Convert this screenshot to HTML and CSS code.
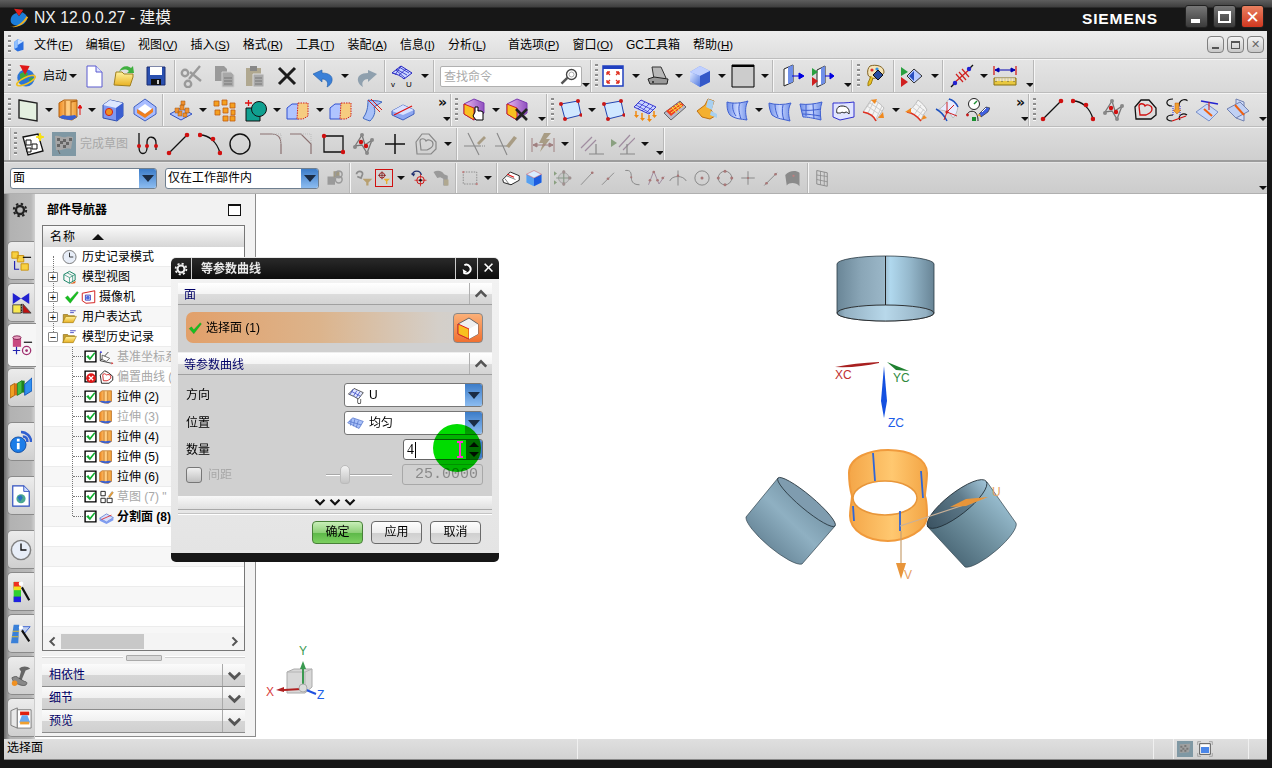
FILE: index.html
```html
<!DOCTYPE html>
<html lang="zh">
<head>
<meta charset="utf-8">
<title>NX 12.0.0.27 - 建模</title>
<link rel="stylesheet" href="styles.css">
</head>
<body>
<svg class="defs" xmlns="http://www.w3.org/2000/svg">
<defs>
<linearGradient id="gB" x1="0" y1="0" x2="1" y2="1"><stop offset="0" stop-color="#dfe8ff"/><stop offset="1" stop-color="#4f78e0"/></linearGradient>
<linearGradient id="gO" x1="0" y1="0" x2="1" y2="0"><stop offset="0" stop-color="#f08a20"/><stop offset=".5" stop-color="#ffd088"/><stop offset="1" stop-color="#ef9a30"/></linearGradient>
<linearGradient id="gY" x1="0" y1="0" x2="0" y2="1"><stop offset="0" stop-color="#fff3a0"/><stop offset="1" stop-color="#e8b020"/></linearGradient>
<linearGradient id="gP" x1="0" y1="0" x2="1" y2="0"><stop offset="0" stop-color="#e8b8f0"/><stop offset="1" stop-color="#9050c0"/></linearGradient>
<linearGradient id="gBs" x1="0" y1="0" x2="1" y2="0"><stop offset="0" stop-color="#6f8fe8"/><stop offset=".5" stop-color="#c8d6ff"/><stop offset="1" stop-color="#6f8fe8"/></linearGradient>
<symbol id="start" viewBox="0 0 24 24"><circle cx="12" cy="14" r="9.5" fill="#2b74d8"/><path d="M5 10l5-3 4 2-1 4-4 4-3-2zM15 15l4-2 1 3-4 4z" fill="#3ea83a"/><ellipse cx="12" cy="17" rx="11" ry="3.5" transform="rotate(-25 12 17)" fill="none" stroke="#f0c020" stroke-width="1.8"/><path d="M5 0l11 1-5 10z" fill="#e01818"/></symbol>
<symbol id="new" viewBox="0 0 24 24"><path d="M5 2h9l6 6v15H5z" fill="#fff" stroke="#5a5ad0"/><path d="M14 2v6h6" fill="#dfe4ff" stroke="#5a5ad0"/></symbol>
<symbol id="open" viewBox="0 0 24 24"><path d="M1 21l2-13h6l2 2h9v3l-3 9z" fill="url(#gY)" stroke="#a08020"/><path d="M6 8c2-6 8-7 12-4l2-2 1 7-7 0 2-2c-3-2-7-2-10 1z" fill="#40b040"/></symbol>
<symbol id="save" viewBox="0 0 24 24"><path d="M3 3h18v18H3z" fill="#2a50b0" stroke="#1a2c70"/><path d="M6 3h12v8H6z" fill="#fff"/><path d="M7 15h10v6H7z" fill="#111"/><path d="M13 16h2v4h-2z" fill="#ccc"/></symbol>
<symbol id="cut" viewBox="0 0 24 24"><g fill="none" stroke="#9a9a9a" stroke-width="2.4"><path d="M20 2L9 15M10 8l11 9"/><circle cx="5" cy="9" r="3.2"/><circle cx="8" cy="20" r="3.2"/></g></symbol>
<symbol id="copy" viewBox="0 0 24 24"><path d="M3 2h9l3 3v12H3z" fill="#9a9a9a"/><path d="M10 8h9l3 3v12H10z" fill="#a8a8a8" stroke="#d0d0d0"/><path d="M12 14h8M12 17h8M12 20h8" stroke="#777"/></symbol>
<symbol id="paste" viewBox="0 0 24 24"><path d="M3 4h15v18H3z" fill="#b0a890"/><path d="M7 2h7v5H7z" fill="#888"/><path d="M10 10h11v13H10z" fill="#aaa" stroke="#ddd"/><path d="M12 14h7M12 17h7M12 20h7" stroke="#777"/></symbol>
<symbol id="del" viewBox="0 0 24 24"><path d="M4 4l16 16M20 4L4 20" stroke="#1c1c1c" stroke-width="3"/></symbol>
<symbol id="undo" viewBox="0 0 24 24"><path d="M2 10l9-4v3c7 0 11 3 10 8-.6 3-3 5-5 6 2-5-1-8-5-8v3z" fill="#3a80d8" stroke="#1f5aa8" stroke-width=".6"/></symbol>
<symbol id="redo" viewBox="0 0 24 24"><path d="M22 10l-9-4v3c-7 0-11 3-10 8 .6 3 3 5 5 6-2-5 1-8 5-8v3z" fill="#8fa0ae"/></symbol>
<symbol id="surf" viewBox="0 0 24 24"><path d="M2 9l9-7 11 7-8 6c-3-3-7-5-12-6z" fill="#c8d4ff" stroke="#2222c0"/><path d="M6 6l9 8M11 2l-6 9M16 5l-7 6M6 5l11 6M9 3l10 6" stroke="#2222c0" stroke-width=".8"/><text x="1" y="23" font-size="8" font-family="Liberation Sans">v</text><text x="16" y="23" font-size="8" font-family="Liberation Sans">U</text></symbol>
<symbol id="find" viewBox="0 0 24 24"><circle cx="15" cy="9" r="6" fill="#fff" stroke="#444" stroke-width="1.6"/><circle cx="15" cy="9" r="3" fill="none" stroke="#999"/><path d="M10 13l-7 7" stroke="#555" stroke-width="3"/></symbol>
<symbol id="fit" viewBox="0 0 24 24"><path d="M2 2h20v20H2z" fill="#fff" stroke="#2040c0" stroke-width="1.5"/><path d="M2 2h20v3H2z" fill="#2040c0"/><path d="M6 8l3 3M18 8l-3 3M6 19l3-3M18 19l-3-3M6 8h3M6 8v3M18 8h-3M18 8v3M6 19h3M6 19v-3M18 19h-3M18 19v-3" stroke="#e03020" stroke-width="1.3"/></symbol>
<symbol id="shade" viewBox="0 0 24 24"><path d="M6 3h9l5 11-3 1H8z" fill="#b8b8b8" stroke="#333"/><path d="M2 15l6-2 14 2-1 5H4z" fill="#999" stroke="#222"/><circle cx="7" cy="18" r="1" fill="#222"/></symbol>
<symbol id="cube" viewBox="0 0 24 24"><path d="M2 8l10-6 10 5v11l-10 5-10-6z" fill="#6f8ff0"/><path d="M2 8l10-6 10 5-10 5z" fill="#c0d0ff"/><path d="M12 12l10-5v11l-10 5z" fill="#3458c8"/><path d="M2 8l10 4v11l-10-6z" fill="url(#gB)"/></symbol>
<symbol id="rectk" viewBox="0 0 24 24"><path d="M1 1h22v22H1z" fill="#ccc" stroke="#000"/><path d="M1 1h22v2H1z"/></symbol>
<symbol id="plA" viewBox="0 0 24 24"><path d="M2 5l9-4v17l-9 4z" fill="#fff" stroke="#222"/><path d="M11 1v17l-5 2V3z" fill="#6f8fe8"/><path d="M10 12h11M17 9l5 3-5 3z" stroke="#0000e0" fill="#0000e0"/></symbol>
<symbol id="plB" viewBox="0 0 24 24"><path d="M6 6l8-4v17l-8 4z" fill="#fff" stroke="#222"/><path d="M14 2v17l-4 2V4z" fill="#6f8fe8"/><path d="M14 12h8M19 9l4 3-4 3z" stroke="#0000e0" fill="#0000e0"/><path d="M1 4l6 4-6 4z" fill="#2aa040"/><path d="M1 13l6 4-6 5z" fill="#d02020"/></symbol>
<symbol id="pal" viewBox="0 0 24 24"><path d="M6 2c6-2 14 0 14 6 0 4-6 2-7 5-1 2-7 2-9-2-1-4 0-7 2-9z" fill="#f4e4b8" stroke="#806020"/><circle cx="8" cy="6" r="1.6" fill="#e03030"/><circle cx="13" cy="5" r="1.6" fill="#3090e0"/><path d="M9 14l-2 6-3 2v-3l3-7" fill="#e8c020" stroke="#a08010"/><path d="M14 6l5 5-5 5-5-5z" fill="#2a4ca0" stroke="#111"/></symbol>
<symbol id="vis" viewBox="0 0 24 24"><path d="M14 5l8 7-8 7-7-7z" fill="#b8ccff" stroke="#333"/><path d="M14 7l-5 5 5 5z" fill="#2a50c0"/><path d="M1 3l7 5-7 4z" fill="#2aa040"/><path d="M1 13l7 5-7 5z" fill="#d02020"/></symbol>
<symbol id="ant" viewBox="0 0 24 24"><path d="M3 20L21 4M6 10l7 8M9 8l7 8M12 5l7 8" stroke="#d02020" stroke-width="1.2"/><path d="M1 23l3-3M23 1l-3 3" stroke="#111" stroke-width="1.4"/><circle cx="5" cy="19" r="2.2" fill="#2222d0"/><circle cx="19" cy="5" r="2.2" fill="#2222d0"/></symbol>
<symbol id="rul" viewBox="0 0 24 24"><path d="M1 2v9M23 2v9" stroke="#d01010" stroke-width="1.2"/><path d="M2 6h20M2 6l4-2v4zM22 6l-4-2v4z" stroke="#0000b0" fill="#0000b0"/><path d="M1 14h22v7H1z" fill="#e8c840" stroke="#887010"/><path d="M3 14v4M6 14v3M9 14v4M12 14v3M15 14v4M18 14v3M21 14v4" stroke="#444" stroke-width=".8"/><path d="M2 14h20v3H2z" fill="#fff" fill-opacity=".6"/></symbol>
<symbol id="plane" viewBox="0 0 24 24"><path d="M3 2l18 3v18L3 20z" fill="#e4f0e0" stroke="#222" stroke-width="1.4"/></symbol>
<symbol id="extr" viewBox="0 0 24 24"><path d="M1 5l5-3h13v17l-5 3c-5-1-9-1-13-3z" fill="url(#gO)" stroke="#b06010"/><path d="M7 3v17M13 3v19M19 3l-6 1" stroke="#b06010"/><path d="M1 19c4 3 10 3 13 3l5-3-2-2c-4 1-10 1-12 0z" fill="#3a60d0"/><path d="M22 8v9M20 10l2-3 2 3z" stroke="#e01010" fill="#e01010"/></symbol>
<symbol id="hole" viewBox="0 0 24 24"><path d="M2 7l7-5 13 3v13l-6 5L2 20z" fill="#8098f0" stroke="#3050b0"/><path d="M2 7l13 3 7-5-13-3z" fill="#dde6ff"/><path d="M15 10v13l7-5V5z" fill="#3a5ed0"/><circle cx="8" cy="14" r="3.6" fill="#f09020" stroke="#d02020"/></symbol>
<symbol id="offs" viewBox="0 0 24 24"><path d="M12 1l11 8v7l-11 7L1 16V9z" fill="#a8bcff" stroke="#3f5fc0"/><path d="M12 6l7 5-7 5-7-5z" fill="#fff"/><path d="M4 11l8 5 8-6v4l-8 6-8-5z" fill="#f08020"/></symbol>
<symbol id="patt" viewBox="0 0 24 24"><path d="M1 16l11-6 11 6-11 6z" fill="#b0c4ff" stroke="#3050c0"/><g fill="#f09030" stroke="#a05a10" stroke-width=".5"><path d="M6 10h4v5H6zM11 7h4v5h-4zM16 10h4v5h-4zM9 13h4v5H9zM14 15h4v4h-4zM12 3h4v4h-4z"/></g></symbol>
<symbol id="pat2" viewBox="0 0 24 24"><g fill="#f4a020" stroke="#c05a10" stroke-width=".8"><path d="M2 3h5v5H2zM10 2h5v5h-5zM18 5h5v5h-5zM3 12h5v5H3zM11 10h5v5h-5zM19 12h4v5h-4zM11 18h5v5h-5zM18 18h5v5h-5z"/></g></symbol>
<symbol id="unite" viewBox="0 0 24 24"><path d="M2 10h14v13H2z" fill="#10a090" stroke="#111"/><circle cx="15" cy="11" r="7.5" fill="#10a090" stroke="#111"/><path d="M1 5h7M4.500 2v6" stroke="#e01010" stroke-width="1.3"/></symbol>
<symbol id="trm" viewBox="0 0 24 24"><path d="M1 10l5-4h11v12l-5 3H1z" fill="#b0c4ff" stroke="#3050d0"/><path d="M12 5h10v13l-5 3h-6z" fill="#f6cc80" stroke="#d02020" stroke-dasharray="1.500 1"/></symbol>
<symbol id="rld" viewBox="0 0 24 24"><path d="M8 2c4 1 9 0 14 2l-8 5c2 5 0 10-4 14-3-1-6-2-7-3 4-5 5-11 5-18z" fill="#a8c0f8" stroke="#4068c0"/><path d="M8 2l12 12M11 1l11 11" stroke="#d02020"/></symbol>
<symbol id="spl" viewBox="0 0 24 24"><path d="M1 13l11-6 11 5v4l-11 6-11-5z" fill="#8fa8f0" stroke="#4060c0"/><path d="M1 13l11-6 11 5-11 5z" fill="#d8e2ff"/><path d="M3 17L21 8" stroke="#e01010" stroke-width="1.3"/></symbol>
<symbol id="bxh" viewBox="0 0 24 24"><path d="M2 6l10-5 10 4v10l-10 7L2 16z" fill="url(#gP)" stroke="#7a3ab0"/><path d="M2 6l10 4v12L2 16z" fill="#f8c020" stroke="#d02020"/><path d="M13 14v-5h3v4l3 0 2 1v8h-7l-3-4z" fill="#fff" stroke="#000"/></symbol>
<symbol id="bxx" viewBox="0 0 24 24"><path d="M2 6l10-5 10 4v10l-10 7L2 16z" fill="url(#gP)" stroke="#7a3ab0"/><path d="M2 6l10 4v12L2 16z" fill="#f8c020" stroke="#d02020"/><path d="M11 11l11 11M22 11L11 22" stroke="#222" stroke-width="2.6"/></symbol>
<symbol id="pA" viewBox="0 0 24 24"><path d="M3 6l17-3 3 14-16 4z" fill="#d0e8ff" stroke="#2244b0"/><g fill="#c81818"><circle cx="3" cy="6" r="2"/><circle cx="20" cy="3" r="2"/><circle cx="23" cy="17" r="1.800"/><circle cx="7" cy="21" r="2"/></g></symbol>
<symbol id="mesh" viewBox="0 0 24 24"><path d="M1 9l7-7 15 7-7 7z" fill="#c8d4ff" stroke="#3838d0"/><path d="M5 5l15 7M3 7l14 8M12 4l-7 7M16 6l-7 7M20 8l-7 7" stroke="#3838d0" stroke-width=".8"/><path d="M3 13v5M9 15v6M16 17v5M21 13v5" stroke="#f08a10" stroke-width="1.500"/><path d="M1 17h5l-2.500 3zM7 20h5l-2.500 3zM14 21h5l-2.500 3zM19 17h5l-2.500 3z" fill="#f08a10"/></symbol>
<symbol id="heat" viewBox="0 0 24 24"><path d="M1 15l7 7 15-13-6-6z" fill="#b8b8c8" stroke="#666"/><path d="M3 13l5 5 13-11-4-3z" fill="#f04020"/><path d="M6 13l12-8M8 15l11-8M9 9l5 6M12 7l5 6M15 5l4 5" stroke="#f8e040"/></symbol>
<symbol id="swp" viewBox="0 0 24 24"><path d="M15 1l6 2-3 9 4 6-5 3-8-2-5-6 8-6z" fill="#f4b030" stroke="#c07010"/><path d="M15 1l6 2-2 9-6-3z" fill="#a8d0f0"/><path d="M17 17l7 3v-4l-6-3" fill="#a8d0f0"/></symbol>
<symbol id="cA" viewBox="0 0 24 24"><path d="M2 4c6 2 15 1 21-1-3 5-3 12-1 19-6-1-12-1-17-5C2 13 2 9 2 4z" fill="url(#gBs)" stroke="#4060d0"/><path d="M8 5c-1 4 0 9 3 13M15 5c-2 4-1 10 1 16" stroke="#4060d0" fill="none"/></symbol>
<symbol id="cB" viewBox="0 0 24 24"><path d="M1 5c6 2 15 2 22 0-3 5-3 11-1 18-7-2-13-2-18-6C2 13 1 9 1 5z" fill="url(#gBs)" stroke="#4060d0"/><path d="M7 6c0 4 1 9 3 13M15 7c-1 4-1 10 1 15" stroke="#4060d0" fill="none"/></symbol>
<symbol id="cC" viewBox="0 0 24 24"><path d="M1 6c7 1 15 0 22-2-2 6-2 11-1 18-8-2-14-3-18-3-1-4-2-8-3-13z" fill="url(#gBs)" stroke="#4060d0"/><path d="M7 6v12M14 6l1 15M2 12c6 1 14 0 20-1M3 16c6 0 12 1 19 2" stroke="#4060d0" fill="none"/></symbol>
<symbol id="cD" viewBox="0 0 24 24"><path d="M2 5c8 0 14 0 21-1v15l-14 3-7-3z" fill="#e0e4ff" stroke="#3030d0"/><path d="M6 15c-1-3 0-7 5-7s8 3 7 8c-1-1-2-2-3-2l-2 1c-1-1-3-1-3 0-1 0-2 0-4 0z" fill="#fff" stroke="#222"/></symbol>
<symbol id="cE" viewBox="0 0 24 24"><path d="M10 2c4 0 9 3 13 8l-8 13c-3-5-8-8-13-9z" fill="#f4f4f4" stroke="#bbb"/><path d="M10 2c-1 4-5 8-8 12M13 3l-6 12M17 5l-6 13M21 8l-6 13M6 8l12 8M9 5l12 8" stroke="#ccc" fill="none"/><path d="M2 14c6 1 11 4 13 9" stroke="#e03020" stroke-width="1.500" fill="none"/><path d="M10 2l6-1-2 5zM17 20l5-6 1 6z" fill="#f08a20"/></symbol>
<symbol id="cF" viewBox="0 0 24 24"><path d="M14 2c4 3 7 6 9 10-3 3-5 7-6 11-4-5-8-8-14-9 5-3 8-7 11-12z" fill="#f4f4f4" stroke="#bbb"/><path d="M8 9l12 9M11 5l11 9M10 17l7-10M13 20l7-9" stroke="#ccc"/><path d="M3 14c6 1 10 4 14 9" stroke="#e03020" stroke-width="1.500" fill="none"/><path d="M1 14l6-4v5zM17 22l3-5 3 3z" fill="#f08a20"/></symbol>
<symbol id="csy" viewBox="0 0 24 24"><path d="M14 1c4 1 7 4 9 8-1 5-2 8-5 11-3-5-6-8-15-8 5-3 8-7 11-11z" fill="#e8ecff" stroke="#bbb"/><path d="M1 11c4 2 8 6 11 12" stroke="#1c50c0" stroke-width="1.500" fill="none"/><path d="M14 1c4 1 7 4 9 8" stroke="#1c50c0" stroke-width="1.500" fill="none"/><path d="M12 14L12 4M12 14l10 4M12 14l-3 8M12 14l7-7" stroke="#d02020"/><circle cx="12" cy="14" r="1.600" fill="#d02020"/></symbol>
<symbol id="gge" viewBox="0 0 24 24"><circle cx="8" cy="6" r="5.500" fill="#fff" stroke="#222"/><path d="M8 6l3-3" stroke="#1a9030" stroke-width="1.500"/><path d="M1 17c1-4 6-5 9-2 1 2 2 3 2 8" fill="none" stroke="#222"/><circle cx="1.500" cy="17" r="1.400" fill="#c81818"/><path d="M6 19h4v4H6z" fill="#1a9030"/><path d="M13 16l7-7 4 1-2 4-7 5z" fill="#4060e0" stroke="#222" stroke-width=".6"/><path d="M16 14l4-4" stroke="#fff"/><path d="M11 17l3-1 1 3z" fill="#e8a020"/></symbol>
<symbol id="lin" viewBox="0 0 24 24"><path d="M3 21L20 4" stroke="#111" stroke-width="1.300"/><circle cx="3" cy="21" r="2.300" fill="#d01010"/><circle cx="21" cy="3" r="2.300" fill="#d01010"/></symbol>
<symbol id="arc" viewBox="0 0 24 24"><path d="M2 3c9 0 17 7 20 18" fill="none" stroke="#111" stroke-width="1.300"/><circle cx="2" cy="3" r="2.300" fill="#d01010"/><circle cx="15" cy="7" r="2.300" fill="#d01010"/><circle cx="22" cy="21" r="2.300" fill="#d01010"/></symbol>
<symbol id="pol" viewBox="0 0 24 24"><path d="M3 14l7-11 3 10 7-5-5 13-5-8z" fill="none" stroke="#777" stroke-width="1.300"/><g fill="#888"><circle cx="10" cy="3" r="2"/><circle cx="3" cy="15" r="2"/><circle cx="20" cy="8" r="2"/><circle cx="15" cy="21" r="2"/></g><circle cx="9" cy="10" r="2.200" fill="#d01010"/><circle cx="14" cy="14" r="2.200" fill="#d01010"/></symbol>
<symbol id="hrt" viewBox="0 0 24 24"><path d="M2 9l6-7h8l7 8v7l-5 4H3z" fill="none" stroke="#111" stroke-width="1.300"/><path d="M6 8c0-3 5-3 6 0 2-2 7-1 7 3 0 3-2 4-6 6H7z" fill="none" stroke="#d01010" stroke-width="1.300"/></symbol>
<symbol id="brg" viewBox="0 0 24 24"><path d="M9 1C1 1 1 8 8 8M9 17c-8 0-8 6-1 6M15 8c0-8 9-7 8-5M16 22c-3-4 3-8 7-5" fill="none" stroke="#111" stroke-width="1.200"/><path d="M9 8v10M16 8v10" stroke="#2222e0" stroke-dasharray="1 1"/><path d="M11 5h4v7h2l-4 4-4-4h2z" fill="#f0a030" stroke="#c05a10" stroke-width=".5"/><path d="M8 23l14-5" stroke="#d01010" stroke-width="1.300"/></symbol>
<symbol id="prj" viewBox="0 0 24 24"><path d="M1 14l11-8 11 8-9 9z" fill="#c8d8f8" stroke="#7a90c8"/><path d="M6 3l17 3" stroke="#2222d0" stroke-width="1.500"/><path d="M14 4v8" stroke="#d01010"/><path d="M9 11l8 7" stroke="#f06010" stroke-width="2"/></symbol>
<symbol id="int" viewBox="0 0 24 24"><path d="M10 1l8 3v19l-8-3z" fill="#d0dcf8" stroke="#7080b0"/><path d="M1 11l13-7 9 9-13 7z" fill="#c0d0f4" stroke="#7080b0"/><path d="M9 7l9 10" stroke="#f06010" stroke-width="2"/></symbol>
<symbol id="skt" viewBox="0 0 24 24"><path d="M2 5l15-3 5 17-15 4z" fill="#fff" stroke="#111" stroke-width="1.300"/><path d="M5 8h5v5H5zM11 12h5v5h-5zM6 16h4v4H6z" fill="#fff" stroke="#111"/><path d="M19 1l1 3 3 1-3 1-1 3-1-3-3-1 3-1z" fill="#f8e010" stroke="#f8e010"/></symbol>
<symbol id="flag" viewBox="0 0 24 24"><path d="M0 0h24v24H0z" fill="#7f98a4"/><path d="M3 4c4-1 7 2 11 1s5 0 7 0l-2 12c-4-1-6 0-10 1s-4 0-5 0z" fill="#a6a6a6"/><path d="M5 6l3 0 0 3-3 0zM11 7h3v3h-3zM17 6h3v3h-3zM8 9h3v3H8zM14 10h3v3h-3zM5 12h3v3H5zM11 13h3v3h-3z" fill="#666"/><path d="M6 18l2 4" stroke="#666"/></symbol>
<symbol id="spln" viewBox="0 0 24 24"><path d="M4 1v14c0 9 8 8 8 1v-6c0-7 9-6 9 1v7" fill="none" stroke="#111" stroke-width="1.300"/><g fill="#d01010"><circle cx="4" cy="14" r="2"/><circle cx="12" cy="14" r="2"/><circle cx="21" cy="14" r="2"/></g></symbol>
<symbol id="circ" viewBox="0 0 24 24"><circle cx="12" cy="12" r="10" fill="none" stroke="#111" stroke-width="1.400"/></symbol>
<symbol id="fl1" viewBox="0 0 24 24"><path d="M1 2h12c6 0 9 4 9 10v10" fill="none" stroke="#8a7070" stroke-width="1.200"/><path d="M13 2h9v10" fill="none" stroke="#bbb" stroke-dasharray="1 1"/></symbol>
<symbol id="fl2" viewBox="0 0 24 24"><path d="M1 2h11l10 10v10" fill="none" stroke="#8a7070" stroke-width="1.200"/><path d="M12 2h10v10" fill="none" stroke="#bbb" stroke-dasharray="1 1"/></symbol>
<symbol id="rct" viewBox="0 0 24 24"><path d="M3 4h19v16H3z" fill="none" stroke="#111" stroke-width="1.300"/><circle cx="3" cy="4" r="2.200" fill="#d01010"/><circle cx="22" cy="20" r="2.200" fill="#d01010"/></symbol>
<symbol id="pls" viewBox="0 0 24 24"><path d="M12 2v20M2 12h20" stroke="#111" stroke-width="1.500"/></symbol>
<symbol id="hrg" viewBox="0 0 24 24"><path d="M2 10l6-8h7l7 8v7l-5 5H3z" fill="none" stroke="#888" stroke-width="1.200"/><path d="M6 9c0-3 5-3 6 0 2-2 7-1 7 3 0 3-2 4-6 6H7z" fill="none" stroke="#888" stroke-width="1.200"/></symbol>
<symbol id="cn1" viewBox="0 0 24 24"><path d="M5 1l11 22M1 14h16" stroke="#888" stroke-width="1.100"/><path d="M14 11l7-7 2 2-7 7z" fill="#a89c84"/><path d="M17 14h6" stroke="#888" stroke-dasharray="1 1"/></symbol>
<symbol id="cn2" viewBox="0 0 24 24"><path d="M3 1l10 22M1 14h12" stroke="#888" stroke-width="1.100"/><path d="M12 14l8-10 3 2-8 10z" fill="#a89c84"/></symbol>
<symbol id="bol" viewBox="0 0 24 24"><path d="M13 1h7l-5 6h4L9 20l3-9H8z" fill="#a89c84"/><path d="M1 6v14M23 6v14M2 13h20M2 13l4-2v4zM22 13l-4-2v4z" stroke="#a08080" fill="#a08080"/></symbol>
<symbol id="dm1" viewBox="0 0 24 24"><path d="M1 16L12 5M5 19L16 8" stroke="#a08ca0" stroke-width="1.200"/><path d="M16 12v10M9 22h15" stroke="#888" stroke-width="1.200"/></symbol>
<symbol id="dm2" viewBox="0 0 24 24"><path d="M0 7l6 4-6 4z" fill="#8aa080"/><path d="M8 15L19 3M12 18L24 6" stroke="#a08ca0" stroke-width="1.200"/><path d="M16 12v10M9 22h15" stroke="#888" stroke-width="1.200"/></symbol>
<symbol id="s1" viewBox="0 0 24 24"><path d="M2 10h10v11H2z" fill="#9a9a9a"/><path d="M10 3h8v8h-8z" fill="#a09880"/><circle cx="17" cy="14" r="4.500" fill="none" stroke="#999" stroke-width="2"/><circle cx="17" cy="7" r="4.500" fill="none" stroke="#999" stroke-width="2"/></symbol>
<symbol id="s2" viewBox="0 0 24 24"><path d="M2 7c0-5 9-5 8 0l-2 5-5-2" fill="none" stroke="#8c8c8c" stroke-width="2.400"/><path d="M10 13h13l-5 5v4h-3v-4z" fill="#b8a070"/></symbol>
<symbol id="s3" viewBox="0 0 24 24"><circle cx="9" cy="8" r="4" fill="none" stroke="#a00000" stroke-width="1.200"/><path d="M3 8h12M9 2v12" stroke="#600" stroke-width="1"/><path d="M11 13h10l-4 4v4h-2v-4z" fill="#e8b030"/></symbol>
<symbol id="s4" viewBox="0 0 24 24"><path d="M3 8c1-7 11-7 12 0" fill="none" stroke="#203070" stroke-width="1.800"/><path d="M1 6l4 4 2-4z" fill="#203070"/><circle cx="14" cy="15" r="5" fill="none" stroke="#d01010" stroke-width="1.300"/><path d="M6 15h16M14 7v16" stroke="#d01010"/><circle cx="14" cy="15" r="1.800" fill="#111"/></symbol>
<symbol id="s5" viewBox="0 0 24 24"><path d="M2 4c5-3 12-2 14 3l5 2v13h-6v-9l-4-2-4 1z" fill="#9a9a9a"/><path d="M16 14h6v8h-6z" fill="#b0a890"/></symbol>
<symbol id="s6" viewBox="0 0 24 24"><path d="M3 4h18v16H3z" fill="none" stroke="#888" stroke-width="1.200" stroke-dasharray="2 1.500"/><circle cx="3" cy="4" r="1.500" fill="#c08080"/><circle cx="21" cy="20" r="1.500" fill="#c08080"/></symbol>
<symbol id="s7" viewBox="0 0 24 24"><path d="M1 14l10-10 12 5v6L12 21 2 18z" fill="#fff" stroke="#222" stroke-width="1.300"/><path d="M6 9l12 5M4 13l6 8" stroke="#555"/><path d="M7 7l9 4" stroke="#e01010" stroke-width="1.500"/></symbol>
<symbol id="s8" viewBox="0 0 24 24"><path d="M2 7l10-5 10 5v11l-10 5-10-5z" fill="#8fc8f8"/><path d="M12 12l10-5v11l-10 5z" fill="#1c5ce0"/><path d="M2 7l10 5v11l-10-5z" fill="#58a0f0"/><path d="M2 7l10-5 10 5-10 5z" fill="#d8ecff" stroke="#e04040" stroke-width=".6"/></symbol>
<symbol id="n1" viewBox="0 0 24 24"><circle cx="13" cy="12" r="7" fill="#c8c8c8" stroke="#999"/><path d="M13 2v20M3 12h20" stroke="#8a9a8a" stroke-width="1.500"/><circle cx="13" cy="4" r="2.200" fill="#a09090"/><circle cx="13" cy="20" r="2.200" fill="#a09090"/><circle cx="21" cy="12" r="2.200" fill="#a09090"/><path d="M0 3l4 3-4 3zM0 15l4 3-4 3z" fill="#8aa080"/></symbol>
<symbol id="n2" viewBox="0 0 24 24"><path d="M4 21L19 5" stroke="#888" stroke-width="1.200"/><circle cx="19" cy="5" r="1.800" fill="#a87878"/></symbol>
<symbol id="n3" viewBox="0 0 24 24"><path d="M4 21L20 5" stroke="#888" stroke-width="1.200"/><circle cx="12" cy="13" r="1.800" fill="#a87878"/></symbol>
<symbol id="n4" viewBox="0 0 24 24"><path d="M3 2c7-1 8 3 8 8s1 11 11 11" fill="none" stroke="#888" stroke-width="1.300"/><circle cx="11" cy="11" r="1.400" fill="#a87878"/></symbol>
<symbol id="n5" viewBox="0 0 24 24"><path d="M2 21L9 3l7 17 7-10" fill="none" stroke="#a08ca0" stroke-width="1.300"/><g fill="#a87878"><circle cx="9" cy="4" r="1.800"/><circle cx="4" cy="15" r="1.800"/><circle cx="14" cy="15" r="1.800"/><circle cx="21" cy="12" r="1.800"/></g></symbol>
<symbol id="n6" viewBox="0 0 24 24"><path d="M12 2v20M1 16c3-8 18-8 22 0" fill="none" stroke="#888" stroke-width="1.300"/><circle cx="12" cy="9" r="1.600" fill="#a87878"/></symbol>
<symbol id="n7" viewBox="0 0 24 24"><circle cx="12" cy="12" r="9.500" fill="none" stroke="#888" stroke-width="1.300"/><circle cx="12" cy="12" r="2" fill="#a87878"/></symbol>
<symbol id="n8" viewBox="0 0 24 24"><circle cx="12" cy="12" r="9" fill="none" stroke="#888" stroke-width="1.300"/><g fill="#a87878"><circle cx="12" cy="3" r="2"/><circle cx="21" cy="12" r="2"/><circle cx="12" cy="21" r="2"/><circle cx="3" cy="12" r="2"/></g></symbol>
<symbol id="n9" viewBox="0 0 24 24"><path d="M12 3v18M3 12h18" stroke="#888" stroke-width="1.300"/><circle cx="12" cy="12" r="1.500" fill="#a87878"/></symbol>
<symbol id="n10" viewBox="0 0 24 24"><path d="M3 22L20 5" stroke="#888" stroke-width="1.300"/><circle cx="6" cy="19" r="1.800" fill="#a87878"/><circle cx="18" cy="7" r="1.800" fill="#a87878"/></symbol>
<symbol id="n11" viewBox="0 0 24 24"><path d="M3 8c5-6 14-7 19-3v18c-4-5-13-6-17-1z" fill="#8a8a8a"/><circle cx="14" cy="9" r="1.500" fill="#c08080"/></symbol>
<symbol id="n12" viewBox="0 0 24 24"><path d="M5 2l14 3v18L5 20z" fill="none" stroke="#888" stroke-width="1.200"/><path d="M5 8l14 2M5 14l14 3M10 3v18M15 4v18" stroke="#888"/></symbol>
<symbol id="mflag" viewBox="0 0 24 24"><path d="M0 0h24v24H0z" fill="#7f98a4"/><path d="M4 5l16-1-2 13-14 1z" fill="#a0a0a0"/><path d="M5 7h3v3H5zM11 6h3v3h-3zM8 10h3v3H8zM14 10h3v3h-3zM5 13h3v3H5zM11 13h3v3h-3z" fill="#777"/></symbol>
<symbol id="scr" viewBox="0 0 24 24"><path d="M1 6V1h5M18 1h5v5M23 18v5h-5M6 23H1v-5" fill="none" stroke="#999" stroke-width="1.200"/><path d="M4 4h16v16H4z" fill="#fff" stroke="#111"/><path d="M6 9h12v9H6z" fill="#4a86e8"/></symbol>
<symbol id="gear" viewBox="0 0 24 24"><circle cx="12" cy="12" r="6" fill="none" stroke="currentColor" stroke-width="3.500"/><circle cx="12" cy="12" r="9.300" fill="none" stroke="currentColor" stroke-width="3" stroke-dasharray="3.600 3.700"/></symbol>
<symbol id="t1" viewBox="0 0 24 24"><path d="M2 2h7v7H2zM8 6h7v7H8z" fill="#f8d040" stroke="#c89010"/><path d="M5 12v9h5" stroke="#2222b0" fill="none" stroke-width="1.300"/><path d="M14 8h9" stroke="#111" stroke-width="1.300"/><path d="M12 15h8v7h-8z" fill="#f8d040" stroke="#c89010"/></symbol>
<symbol id="t2" viewBox="0 0 24 24"><path d="M3 1l9 6 9-6v12l-9-6-9 6z" fill="#2222d0"/><path d="M3 14h9v9H3z" fill="#f8e850" stroke="#444"/><path d="M14 23V13l9 10z" fill="#c01010" stroke="#444"/><path d="M12.500 13v10" stroke="#111" stroke-dasharray="2 1"/></symbol>
<symbol id="t3" viewBox="0 0 24 24"><path d="M2 4h9v10H2z" fill="#c84a80"/><ellipse cx="6.500" cy="4" rx="4.500" ry="2" fill="#e8a0c0" stroke="#802050"/><path d="M6 14v8M2 18h8" stroke="#2222b0" stroke-width="1.300"/><path d="M14 9h9" stroke="#111" stroke-width="1.300"/><circle cx="17" cy="18" r="4.500" fill="none" stroke="#a03070" stroke-width="1.400"/><circle cx="17" cy="18" r="1.500" fill="#a03070"/></symbol>
<symbol id="t4" viewBox="0 0 24 24"><path d="M0 10l5-3v13l-5 3z" fill="#f0a020" stroke="#a06010"/><path d="M5 7h3v13H5z" fill="#e07010"/><path d="M8 7l5-3v13l-5 3z" fill="#40c040" stroke="#208020"/><path d="M13 4h3v13h-3z" fill="#208020"/><path d="M16 8l8-7v14l-8 5z" fill="#3090f0" stroke="#1050b0"/></symbol>
<symbol id="t5" viewBox="0 0 24 24"><path d="M12 1c6 0 11 5 11 11M14 6c3 0 5 2 5 6" fill="none" stroke="#3060d0" stroke-width="2.800"/><circle cx="9" cy="15" r="8.500" fill="#1c7de8" stroke="#0f4aa0"/><path d="M7.500 8.500h3v3h-3zM7.500 13h3v7h-3z" fill="#fff"/></symbol>
<symbol id="t6" viewBox="0 0 24 24"><path d="M3 1h12l6 6v16H3z" fill="#fff" stroke="#3050c0" stroke-width="1.300"/><path d="M15 1v6h6" fill="#cfe0ff" stroke="#3050c0"/><circle cx="12" cy="15" r="5" fill="#4aa890"/><path d="M8 13l4-2 2 3-3 4z" fill="#2b70c0"/></symbol>
<symbol id="t7" viewBox="0 0 24 24"><circle cx="12" cy="12" r="10.500" fill="#e8eef8" stroke="#808080" stroke-width="1.600"/><path d="M12 5v7h6" fill="none" stroke="#111" stroke-width="1.500"/></symbol>
<symbol id="t8" viewBox="0 0 24 24"><path d="M4 1h8v22H4z" fill="#2fd030"/><path d="M4 1h8v7H4z" fill="#f03020"/><path d="M4 6h8v4H4z" fill="#f0e020"/><path d="M4 17h8v6H4z" fill="#2020e0"/><path d="M13 7l8 14" stroke="#111" stroke-width="2.400"/><circle cx="12" cy="3" r="2.500" fill="#fff"/></symbol>
<symbol id="t9" viewBox="0 0 24 24"><path d="M4 2h6l-1 20H1z" fill="#3a80d8"/><path d="M3 9h7M2 15h7" stroke="#f0c020"/><path d="M11 4h11l-6 7z" fill="#c0d0f0" stroke="#3a60d0"/><path d="M13 8l8 12" stroke="#111" stroke-width="2.400"/><circle cx="12" cy="5" r="2.300" fill="#fff"/></symbol>
<symbol id="t10" viewBox="0 0 24 24"><path d="M10 4c3-3 9-3 12 0l-5 2-5 12h-3l3-11z" fill="#666"/><path d="M2 14c3-2 6-2 7 0l7 4c3 0 3 3 1 4-2 1-6 0-8-1l-5-2z" fill="#888" stroke="#333" stroke-width=".6"/><circle cx="5" cy="20" r="3" fill="#f09020"/></symbol>
<symbol id="t11" viewBox="0 0 24 24"><path d="M1 4l7-3v22l-7-3z" fill="#e8e8e8" stroke="#777"/><path d="M8 3h15v20H8z" fill="#fff" stroke="#777"/><path d="M11 5h10v4H11z" fill="#e02010"/><path d="M13 9h6l3 8H10z" fill="#6aa8f0"/><path d="M11 16h10v3H11z" fill="#f0a030"/></symbol>
<symbol id="tclk" viewBox="0 0 24 24"><circle cx="12" cy="12" r="10.500" fill="#e8eef8" stroke="#777" stroke-width="1.500"/><path d="M12 5v7h6" fill="none" stroke="#111" stroke-width="1.300"/></symbol>
<symbol id="tmod" viewBox="0 0 24 24"><path d="M3 8l9-5 9 5v9l-9 5-9-5z" fill="none" stroke="#108060" stroke-width="1.500"/><path d="M3 8l9 5 9-5M12 13v9M8 5l9 5v9" stroke="#108060" fill="none"/><path d="M13 23l9-5-1 4z" fill="#e06020"/></symbol>
<symbol id="chk" viewBox="0 0 24 24"><path d="M2 13l4-3 4 5L21 3l2 2-13 17z" fill="#18c020" stroke="#108018" stroke-width=".5"/></symbol>
<symbol id="tcam" viewBox="0 0 24 24"><path d="M2 6l20-4v19L8 22l-6-4z" fill="#fff" stroke="#d01818" stroke-width="1.500"/><path d="M7 9h8v8H7z" fill="#fff" stroke="#2222b0" stroke-width="1.300"/><circle cx="11" cy="13" r="3" fill="#4a6ae0"/></symbol>
<symbol id="tfld" viewBox="0 0 24 24"><path d="M2 21V8h7l2 2h9v2H7z" fill="#c8a030" stroke="#8a6a10"/><path d="M1 21l5-10h17l-5 10z" fill="url(#gY)" stroke="#a07a10"/><path d="M13 2h9M13 5h6" stroke="#2020b0" stroke-width="1.200"/></symbol>
<symbol id="tbox" viewBox="0 0 24 24"><path d="M2 2h20v20H2z" fill="#fff" stroke="#000" stroke-width="2.600"/><path d="M4 12l4-3 3 5 8-10 2 2-10 13z" fill="#10b030"/></symbol>
<symbol id="tbxx" viewBox="0 0 24 24"><path d="M2 2h20v20H2z" fill="#fff" stroke="#000" stroke-width="2.600"/><circle cx="13" cy="15" r="9" fill="#e01818"/><path d="M9 11l8 8M17 11l-8 8" stroke="#fff" stroke-width="2.200"/></symbol>
<symbol id="tdat" viewBox="0 0 24 24"><path d="M2 5v13l18 4" fill="none" stroke="#222" stroke-width="1.300"/><path d="M2 18l13-14" stroke="#222" stroke-width="1.300"/><path d="M5 9l12 5-5 5-7-3z" fill="#fff" stroke="#222"/><path d="M1 5l2-3 2 3z" fill="#2020d0"/><path d="M20 20l3 2-3 2z" fill="#d02020"/></symbol>
<symbol id="tcv" viewBox="0 0 24 24"><path d="M2 9l7-7 6 3 7 6v6l-6 5H4z" fill="#fff" stroke="#111" stroke-width="1.400"/><path d="M6 9c0-3 5-3 6 0 2-2 7-1 7 3 0 3-2 4-6 6H7z" fill="none" stroke="#d01818" stroke-width="1.400"/></symbol>
<symbol id="tex" viewBox="0 0 24 24"><path d="M1 5l4-3h15v17l-5 3c-5 0-9-1-14-3z" fill="url(#gO)" stroke="#b06010"/><path d="M8 3v18M14 3v19" stroke="#b06010"/><path d="M1 19c5 3 10 3 14 3l5-3-3-1c-4 1-10 1-13 0z" fill="#3a60d0"/></symbol>
<symbol id="tsk" viewBox="0 0 24 24"><path d="M3 3h7v7H3zM3 14h7v7H3zM13 14h8v7h-8z" fill="#fff" stroke="#111" stroke-width="1.400"/><path d="M15 11l6-8 2 2-6 8z" fill="#f0a030" stroke="#555" stroke-width=".5"/></symbol>
<symbol id="tsp" viewBox="0 0 24 24"><path d="M1 14l11-7 11 6-11 7z" fill="#d4deff" stroke="#4060c0"/><path d="M1 14v4l11 5 11-6v-4l-11 7z" fill="#7f9cf0"/><path d="M4 16L20 9" stroke="#e02020" stroke-width="1.300"/></symbol>
<symbol id="cvUp" viewBox="0 0 16 16"><path d="M2 11l6-6 6 6" fill="none" stroke="#555" stroke-width="3"/></symbol>
<symbol id="cvDn" viewBox="0 0 16 16"><path d="M2 5l6 6 6-6" fill="none" stroke="#555" stroke-width="3"/></symbol>
<symbol id="cvBk" viewBox="0 0 16 16"><path d="M2 5l6 6 6-6" fill="none" stroke="#111" stroke-width="3"/></symbol>
<symbol id="dU" viewBox="0 0 24 24"><path d="M2 10l8-8 13 6-7 9c-4-3-9-5-14-7z" fill="#e0e6ff" stroke="#222"/><path d="M6 6l13 7M9 3l-5 8M14 5l-5 8M18 7l-5 8" stroke="#3040c0"/><text x="14" y="24" font-size="9" font-family="Liberation Sans">U</text></symbol>
<symbol id="dE" viewBox="0 0 24 24"><path d="M1 11l7-7 15 5-6 10z" fill="#a8c0f8" stroke="#5070c8"/><path d="M6 6l-1 9M11 6l-2 10M16 8l-3 10M3 9l17 5" stroke="#5070c8"/></symbol>
<symbol id="sel" viewBox="0 0 24 24"><path d="M2 8l11-6 9 6v10l-9 5-11-5z" fill="#f0f0f0" stroke="#666"/><path d="M2 8l11 5v10l-11-5z" fill="#f8c020" stroke="#e02020"/><path d="M13 13l9-5v10l-9 5z" fill="#fff"/></symbol>
<symbol id="logo" viewBox="0 0 24 24"><path d="M6 1l11 1-5 8z" fill="#e02020"/><path d="M2 15c0-5 3-8 7-9l3 4 4-5c4 2 7 5 5 10-2 4-7 7-11 6-4 0-8-2-8-6z" fill="#1c7dd8"/><path d="M1 22c6 2 15-3 20-12l2 1c-5 10-16 14-22 11z" fill="#f0b020"/></symbol>
<symbol id="nxb" viewBox="0 0 24 24"><path d="M8 2l10 4v14l-10 3-6-4V7z" fill="#2a6fe0"/><path d="M8 2v14l-6 3V7z" fill="#8fc0ff"/><path d="M8 2l10 4-10 6z" fill="#c8e0ff"/></symbol>
</defs>
</svg>
<div class="win">
  <header class="tbar">
    <svg class="logo"><use href="#logo"/></svg>
    <span class="wtitle">NX 12.0.0.27 - 建模</span>
    <span class="brand">SIEMENS</span>
    <span class="wb"><i class="ws-min"></i></span>
    <span class="wb"><i class="ws-max"></i></span>
    <span class="wb cl">✕</span>
  </header>
  <nav class="menu">
    <span class="k w5"></span><span class="k w10"><i class="gr sh"></i></span>
    <svg class="nxb"><use href="#nxb"/></svg>
    <ul class="mlist">
      <li>文件<span>(<u>F</u>)</span></li><li>编辑<span>(<u>E</u>)</span></li><li>视图<span>(<u>V</u>)</span></li><li>插入<span>(<u>S</u>)</span></li><li>格式<span>(<u>R</u>)</span></li><li>工具<span>(<u>T</u>)</span></li><li>装配<span>(<u>A</u>)</span></li><li>信息<span>(<u>I</u>)</span></li><li>分析<span>(<u>L</u>)</span></li><li class="far">首选项<span>(<u>P</u>)</span></li><li>窗口<span>(<u>O</u>)</span></li><li>GC工具箱</li><li>帮助<span>(<u>H</u>)</span></li>
    </ul>
    <span class="mdi"><i class="mb"><b class="m-min"></b></i><i class="mb"><b class="m-res"></b></i><i class="mb x">✕</i></span>
  </nav>

  <div class="tb">
    <span class="k w5"></span><span class="k w17"><i class="gr"></i></span>
    <span class="k w17"><svg class="lg"><use href="#start"/></svg></span>
    <span class="k w30 lab"><span class="txt">启动</span></span>
    <span class="k w21"><i class="ar"></i></span>
    <span class="k w31"><svg><use href="#new"/></svg></span>
    <span class="k w31"><svg><use href="#open"/></svg></span>
    <span class="k w19"><svg><use href="#save"/></svg></span>
    <span class="k w17"><i class="sp"></i></span>
    <span class="k w32"><svg><use href="#cut"/></svg></span>
    <span class="k w31"><svg><use href="#copy"/></svg></span>
    <span class="k w32"><svg><use href="#paste"/></svg></span>
    <span class="k w18"><svg><use href="#del"/></svg></span>
    <span class="k w18"><i class="sp"></i></span>
    <span class="k w22"><svg><use href="#undo"/></svg></span>
    <span class="k w22"><i class="ar"></i></span>
    <span class="k w18"><svg><use href="#redo"/></svg></span>
    <span class="k w17"><i class="sp"></i></span>
    <span class="k w23"><svg><use href="#surf"/></svg></span>
    <span class="k w9"><i class="ar"></i></span>
    <span class="k w6"><i class="sp"></i></span>
    <label class="search"><span>查找命令</span><svg><use href="#find"/></svg></label>
    <span class="k w9"><i class="ar lo"></i></span>
    <span class="k w5"><i class="sp"></i></span>
    <span class="k w17"><i class="gr"></i></span>
    <span class="k w23"><svg><use href="#fit"/></svg></span>
    <span class="k w22"><i class="ar"></i></span>
    <span class="k w21"><svg><use href="#shade"/></svg></span>
    <span class="k w21"><i class="ar"></i></span>
    <span class="k w22"><svg><use href="#cube"/></svg></span>
    <span class="k w21"><i class="ar"></i></span>
    <span class="k w22"><svg><use href="#rectk"/></svg></span>
    <span class="k w8"><i class="ar"></i></span>
    <span class="k w21"><i class="sp"></i></span>
    <span class="k w29"><svg><use href="#plA"/></svg></span>
    <span class="k w21"><svg><use href="#plB"/></svg></span>
    <span class="k w8"><i class="ar lo"></i></span>
    <span class="k w6"><i class="sp"></i></span>
    <span class="k w18"><i class="gr"></i></span>
    <span class="k w18"><svg><use href="#pal"/></svg></span>
    <span class="k w18"><i class="sp"></i></span>
    <span class="k w23"><svg><use href="#vis"/></svg></span>
    <span class="k w8"><i class="ar"></i></span>
    <span class="k w19"><i class="sp"></i></span>
    <span class="k w22"><svg><use href="#ant"/></svg></span>
    <span class="k w21"><i class="ar"></i></span>
    <span class="k w21"><svg><use href="#rul"/></svg></span>
    <span class="k w8"><i class="ar lo"></i></span>
    <span class="k w3"><i class="sp"></i></span>
  </div>

  <div class="tb">
    <span class="k w5"></span><span class="k w19"><i class="gr"></i></span>
    <span class="k w21"><svg><use href="#plane"/></svg></span>
    <span class="k w21"><i class="ar"></i></span>
    <span class="k w22"><svg><use href="#extr"/></svg></span>
    <span class="k w21"><i class="ar"></i></span>
    <span class="k w32"><svg><use href="#hole"/></svg></span>
    <span class="k w18"><svg><use href="#offs"/></svg></span>
    <span class="k w18"><i class="sp"></i></span>
    <span class="k w22"><svg><use href="#patt"/></svg></span>
    <span class="k w21"><i class="ar"></i></span>
    <span class="k w32"><svg><use href="#pat2"/></svg></span>
    <span class="k w21"><svg><use href="#unite"/></svg></span>
    <span class="k w21"><i class="ar"></i></span>
    <span class="k w22"><svg><use href="#trm"/></svg></span>
    <span class="k w21"><i class="ar"></i></span>
    <span class="k w31"><svg><use href="#trm"/></svg></span>
    <span class="k w31"><svg><use href="#rld"/></svg></span>
    <span class="k w40"><svg><use href="#spl"/></svg></span>
    <span class="k w8 stack"><i class="more">»</i><i class="ar lo"></i></span>
    <span class="k w5"><i class="sp"></i></span>
    <span class="k w18"><i class="gr"></i></span>
    <span class="k w22"><svg><use href="#bxh"/></svg></span>
    <span class="k w21"><i class="ar"></i></span>
    <span class="k w21"><svg><use href="#bxx"/></svg></span>
    <span class="k w9"><i class="ar lo"></i></span>
    <span class="k w5"><i class="sp"></i></span>
    <span class="k w18"><i class="gr"></i></span>
    <span class="k w22"><svg><use href="#pA"/></svg></span>
    <span class="k w21"><i class="ar"></i></span>
    <span class="k w32"><svg><use href="#pA"/></svg></span>
    <span class="k w30"><svg><use href="#mesh"/></svg></span>
    <span class="k w30"><svg><use href="#heat"/></svg></span>
    <span class="k w32"><svg><use href="#swp"/></svg></span>
    <span class="k w22"><svg><use href="#cA"/></svg></span>
    <span class="k w21"><i class="ar"></i></span>
    <span class="k w31"><svg><use href="#cB"/></svg></span>
    <span class="k w32"><svg><use href="#cC"/></svg></span>
    <span class="k w30"><svg><use href="#cD"/></svg></span>
    <span class="k w23"><svg><use href="#cE"/></svg></span>
    <span class="k w20"><i class="ar"></i></span>
    <span class="k w31"><svg><use href="#cF"/></svg></span>
    <span class="k w31"><svg><use href="#csy"/></svg></span>
    <span class="k w43"><svg><use href="#gge"/></svg></span>
    <span class="k w8 stack"><i class="more">»</i><i class="ar lo"></i></span>
    <span class="k w5"><i class="sp"></i></span>
    <span class="k w18"><i class="gr"></i></span>
    <span class="k w31"><svg><use href="#lin"/></svg></span>
    <span class="k w31"><svg><use href="#arc"/></svg></span>
    <span class="k w31"><svg><use href="#pol"/></svg></span>
    <span class="k w31"><svg><use href="#hrt"/></svg></span>
    <span class="k w31"><svg><use href="#brg"/></svg></span>
    <span class="k w31"><svg><use href="#prj"/></svg></span>
    <span class="k w21"><svg><use href="#int"/></svg></span>
    <span class="k w8"><i class="ar lo"></i></span>
  </div>

  <div class="tb t3">
    <span class="k w6"></span><span class="k w5"><i class="edge"></i></span><span class="k w18"><i class="gr"></i></span>
    <span class="k w31"><svg><use href="#skt"/></svg></span>
    <span class="k w16"><svg><use href="#flag"/></svg></span>
    <span class="txt dis tw">完成草图</span>
    <span class="k w31"><svg><use href="#spln"/></svg></span>
    <span class="k w32"><svg><use href="#lin"/></svg></span>
    <span class="k w30"><svg><use href="#arc"/></svg></span>
    <span class="k w31"><svg><use href="#circ"/></svg></span>
    <span class="k w30"><svg><use href="#fl1"/></svg></span>
    <span class="k w32"><svg><use href="#fl2"/></svg></span>
    <span class="k w31"><svg><use href="#rct"/></svg></span>
    <span class="k w31"><svg><use href="#pol"/></svg></span>
    <span class="k w31"><svg><use href="#pls"/></svg></span>
    <span class="k w22"><svg><use href="#hrg"/></svg></span>
    <span class="k w9"><i class="ar"></i></span>
    <span class="k w18"><i class="sp"></i></span>
    <span class="k w31"><svg><use href="#cn1"/></svg></span>
    <span class="k w19"><svg><use href="#cn2"/></svg></span>
    <span class="k w18"><i class="sp"></i></span>
    <span class="k w22"><svg><use href="#bol"/></svg></span>
    <span class="k w9"><i class="ar"></i></span>
    <span class="k w18"><i class="sp"></i></span>
    <span class="k w31"><svg><use href="#dm1"/></svg></span>
    <span class="k w22"><svg><use href="#dm2"/></svg></span>
    <span class="k w11"><i class="ar"></i></span>
    <span class="k w8"><i class="ar lo"></i></span>
    <span class="k w3"><i class="sp"></i></span>
  </div>

  <div class="tb sbar">
    <span class="combo c1"><span class="cv">面</span><i class="drop"></i></span>
    <span class="combo c2"><span class="cv">仅在工作部件内</span><i class="drop"></i></span>
    <span class="k w16"></span>
    <span class="k w15 sm"><svg><use href="#s1"/></svg></span>
    <span class="k w14"><i class="sp"></i></span>
    <span class="k w20 sm"><svg><use href="#s2"/></svg></span>
    <span class="k w17 sm"><svg class="red"><use href="#s3"/></svg></span>
    <span class="k w18"><i class="ar"></i></span>
    <span class="k w22 sm"><svg><use href="#s4"/></svg></span>
    <span class="k w15 sm"><svg><use href="#s5"/></svg></span>
    <span class="k w14"><i class="sp"></i></span>
    <span class="k w18 sm"><svg><use href="#s6"/></svg></span>
    <span class="k w9"><i class="ar"></i></span>
    <span class="k w14"><i class="sp"></i></span>
    <span class="k w23 sm"><svg><use href="#s7"/></svg></span>
    <span class="k w15 sm"><svg><use href="#s8"/></svg></span>
    <span class="k w14"><i class="sp"></i></span>
    <span class="k w24 sm"><svg><use href="#n1"/></svg></span>
    <span class="k w21 sm"><svg><use href="#n2"/></svg></span>
    <span class="k w24 sm"><svg><use href="#n3"/></svg></span>
    <span class="k w24 sm"><svg><use href="#n4"/></svg></span>
    <span class="k w22 sm"><svg><use href="#n5"/></svg></span>
    <span class="k w24 sm"><svg><use href="#n6"/></svg></span>
    <span class="k w23 sm"><svg><use href="#n7"/></svg></span>
    <span class="k w23 sm"><svg><use href="#n8"/></svg></span>
    <span class="k w23 sm"><svg><use href="#n9"/></svg></span>
    <span class="k w21 sm"><svg><use href="#n10"/></svg></span>
    <span class="k w16 sm"><svg><use href="#n11"/></svg></span>
    <span class="k w14"><i class="sp"></i></span>
    <span class="k w43 sm"><svg><use href="#n12"/></svg></span>
    <span class="fill"></span>
    <span class="k w8"><i class="ar lo"></i></span>
  </div>

  <main class="main">
    <aside class="rail">
      <div class="rgear"><svg><use href="#gear"/></svg></div>
      <div class="tab gl"><svg><use href="#t1"/></svg></div>
      <div class="tab"><svg><use href="#t2"/></svg></div>
      <div class="tab act"><svg><use href="#t3"/></svg></div>
      <div class="tab"><svg><use href="#t4"/></svg></div>
      <div class="tab gl"><svg><use href="#t5"/></svg></div>
      <div class="tab gl"><svg><use href="#t6"/></svg></div>
      <div class="tab gl"><svg><use href="#t7"/></svg></div>
      <div class="tab"><svg><use href="#t8"/></svg></div>
      <div class="tab"><svg><use href="#t9"/></svg></div>
      <div class="tab"><svg><use href="#t10"/></svg></div>
      <div class="tab"><svg><use href="#t11"/></svg></div>
    </aside>
    <section class="nav">
      <div class="nhead"><span class="ntitle">部件导航器</span><i class="nmax"></i></div>
      <div class="tree">
        <div class="thead"><span>名称</span><i class="sort"></i></div>
        <div class="trows">
          <div class="r r0 first"><i class="ex none"></i><svg class="ti m4"><use href="#tclk"/></svg><span class="rt">历史记录模式</span></div>
          <div class="r r0 alt"><i class="ex">+</i><svg class="ti m4"><use href="#tmod"/></svg><span class="rt">模型视图</span></div>
          <div class="r r0"><i class="ex">+</i><svg class="ti m6"><use href="#chk"/></svg><svg class="ti m2"><use href="#tcam"/></svg><span class="rt m4t">摄像机</span></div>
          <div class="r r0 alt"><i class="ex">+</i><svg class="ti m4"><use href="#tfld"/></svg><span class="rt">用户表达式</span></div>
          <div class="r r0 lastr"><i class="ex">−</i><svg class="ti m4"><use href="#tfld"/></svg><span class="rt">模型历史记录</span></div>
          <div class="r r1 alt"><svg class="cb"><use href="#tbox"/></svg><svg class="ti m3"><use href="#tdat"/></svg><span class="rc g">基准坐标系</span></div>
          <div class="r r1"><svg class="cb"><use href="#tbxx"/></svg><svg class="ti m3"><use href="#tcv"/></svg><span class="rc g">偏置曲线 (</span></div>
          <div class="r r1 alt"><svg class="cb"><use href="#tbox"/></svg><svg class="ti m3"><use href="#tex"/></svg><span class="rc">拉伸 (2)</span></div>
          <div class="r r1"><svg class="cb"><use href="#tbox"/></svg><svg class="ti m3"><use href="#tex"/></svg><span class="rc g">拉伸 (3)</span></div>
          <div class="r r1 alt"><svg class="cb"><use href="#tbox"/></svg><svg class="ti m3"><use href="#tex"/></svg><span class="rc">拉伸 (4)</span></div>
          <div class="r r1"><svg class="cb"><use href="#tbox"/></svg><svg class="ti m3"><use href="#tex"/></svg><span class="rc">拉伸 (5)</span></div>
          <div class="r r1 alt"><svg class="cb"><use href="#tbox"/></svg><svg class="ti m3"><use href="#tex"/></svg><span class="rc">拉伸 (6)</span></div>
          <div class="r r1"><svg class="cb"><use href="#tbox"/></svg><svg class="ti m3"><use href="#tsk"/></svg><span class="rc g">草图 (7) "</span></div>
          <div class="r r1 alt lastr"><svg class="cb"><use href="#tbox"/></svg><svg class="ti m3"><use href="#tsp"/></svg><span class="rc b">分割面 (8)</span></div>
          <div class="r"></div><div class="r alt"></div><div class="r"></div><div class="r alt"></div><div class="r"></div><div class="r alt"></div>
        </div>
        <div class="hsb"><svg class="sba"><use href="#cvDn"/></svg><i class="thumb"></i><svg class="sba rgt"><use href="#cvDn"/></svg></div>
      </div>
      <div class="sash"><i class="hd"></i></div>
      <div class="acc"><span>相依性</span><em><svg><use href="#cvDn"/></svg></em></div>
      <div class="acc"><span>细节</span><em><svg><use href="#cvDn"/></svg></em></div>
      <div class="acc"><span>预览</span><em><svg><use href="#cvDn"/></svg></em></div>
    </section>
    <div class="view">
      <svg class="scene" viewBox="256 193 1011 546" xmlns="http://www.w3.org/2000/svg">
        <defs>
          <linearGradient id="cy" x1="0" x2="1" y1="0" y2="0"><stop offset="0" stop-color="#6a8697"/><stop offset=".25" stop-color="#8aa6b7"/><stop offset=".48" stop-color="#9ab6c7"/><stop offset=".55" stop-color="#b0d8ee"/><stop offset=".75" stop-color="#95b8cc"/><stop offset="1" stop-color="#688495"/></linearGradient>
          <linearGradient id="cb" x1="0" x2="1" y1="0" y2="0"><stop offset="0" stop-color="#6f8b9c"/><stop offset=".08" stop-color="#93b0c2"/><stop offset=".5" stop-color="#b8d8ea"/><stop offset=".92" stop-color="#93b0c2"/><stop offset="1" stop-color="#6f8b9c"/></linearGradient>
          <linearGradient id="cl" x1="0" y1="1" x2="1" y2="0"><stop offset="0" stop-color="#4f6c7e"/><stop offset=".5" stop-color="#8fb0c2"/><stop offset="1" stop-color="#5d7b8d"/></linearGradient>
          <linearGradient id="cr" x1="0" y1="1" x2="1" y2="0"><stop offset="0" stop-color="#35505f"/><stop offset=".5" stop-color="#6f909f"/><stop offset="1" stop-color="#afd6ea"/></linearGradient>
          <linearGradient id="ci" x1="0" y1="0" x2="1" y2="0"><stop offset="0" stop-color="#3b5362"/><stop offset=".6" stop-color="#5f7b8b"/><stop offset="1" stop-color="#a0c4d8"/></linearGradient>
          <linearGradient id="co" x1="0" x2="1" y1="0" y2="0"><stop offset="0" stop-color="#f4a648"/><stop offset=".55" stop-color="#ffc870"/><stop offset="1" stop-color="#f3a545"/></linearGradient>
        </defs>
        <path d="M837 263A48.500 8 0 0 1 934 263V312A48.500 8 0 0 1 837 312Z" fill="url(#cy)" stroke="#2a3a44" stroke-width=".8"/>
        <ellipse cx="885.500" cy="312" rx="48.500" ry="8" fill="url(#cb)" stroke="#222" stroke-width=".9"/>
        <path d="M885.500 255V304" stroke="#222" stroke-width="1"/>
        <path d="M879 361Q855 362 835 366Q858 367 879 362Z" fill="#a82020"/>
        <path d="M887 361L909 370 896 369Z" fill="#1f8030"/>
        <path d="M884 365L887 400 884 417 881 400Z" fill="#1450e0"/>
        <text x="835" y="378" class="sl" fill="#c03030">XC</text>
        <text x="893" y="381" class="sl" fill="#2f8a3c">YC</text>
        <text x="888" y="426" class="sl" fill="#1c5ce8">ZC</text>
        <path d="M778 477L746 516A37 9 40 0 0 802 563L835 525Z" fill="url(#cl)" stroke="#33454f" stroke-width=".7"/>
        <ellipse cx="806.500" cy="501" rx="37.300" ry="7" transform="rotate(40 806.500 501)" fill="#7f9caf" stroke="#26343c" stroke-width=".8"/>
        <path d="M987 481L1016 522A34 9 -40 0 1 965 566L927 525Z" fill="url(#cr)" stroke="#33454f" stroke-width=".7"/>
        <ellipse cx="957" cy="503" rx="37" ry="11" transform="rotate(-38 957 503)" fill="url(#ci)" stroke="#1f2c34" stroke-width=".8"/>
        <path d="M849 472C849 456 870 449 888 449C910 449 927 458 927 472C927 482 925 490 925 495C927 500 927 508 927 515C927 530 905 540 888 540C868 540 850 530 850 515C850 507 852 500 852 495C850 488 849 480 849 472Z" fill="url(#co)" stroke="#f09a3c" stroke-width="2"/>
        <ellipse cx="885" cy="497" rx="32" ry="17" fill="#fff" stroke="#e8963a" stroke-width="1.500"/>
        <path d="M873 452L875 480M921 470L923 497M900 510V530M853 505L854 520" stroke="#2f66d8" stroke-width="1.800"/>
        <path d="M900 525L985 497" stroke="#c8b098" stroke-width="1.200"/>
        <path d="M901 530V568" stroke="#c8a070" stroke-width="1.200"/>
        <path d="M950 506L966 498 988 496 966 505Z" fill="#e8953a"/>
        <path d="M896 562L906 562 901 578Z" fill="#e8953a"/>
        <text x="992" y="495" class="sl" fill="#e8a060">U</text>
        <text x="904" y="578" class="sl" fill="#e8a060">V</text>
        <path d="M287 671L294 668H312V686L305 692H287Z" fill="#c8c8c8" fill-opacity=".7" stroke="#aaa"/>
        <path d="M287 671H305V692M305 671L312 668" fill="none" stroke="#b4b4b4"/>
        <path d="M303 688V668" stroke="#3a9a50" stroke-width="2"/>
        <path d="M300 668L303 660 306 668Z" fill="#3a9a50"/>
        <path d="M301 688L284 689" stroke="#b02020" stroke-width="2"/>
        <path d="M284 686L276 689 284 691Z" fill="#b02020"/>
        <path d="M304 688L316 693" stroke="#2050e0" stroke-width="2"/>
        <circle cx="303" cy="687" r="4" fill="#dcdcdc" stroke="#aaa"/>
        <text x="299" y="654" class="sl" fill="#3a9a50">Y</text>
        <text x="266" y="695" class="sl" fill="#d84040">X</text>
        <text x="317" y="698" class="sl" fill="#2060e8">Z</text>
      </svg>
    </div>
  </main>

  <footer class="status">
    <span class="st s-a">选择面</span>
    <span class="st s-b"></span>
    <span class="st s-c"></span>
    <span class="st s-d"><svg><use href="#mflag"/></svg><svg><use href="#scr"/></svg></span>
    <span class="st s-e"></span>
  </footer>

  <div class="dlg">
    <div class="dt">
      <span class="dg"><svg><use href="#gear"/></svg></span>
      <span class="dn">等参数曲线</span>
      <span class="db"><svg viewBox="0 0 16 16"><path d="M5 3.500A5 5 0 1 1 4 12" fill="none" stroke="#fff" stroke-width="2.200"/><path d="M3 8l1 5 4-2z" fill="#fff"/></svg></span>
      <span class="db dx">✕</span>
    </div>
    <div class="db-body">
      <div class="shd"><span>面</span><em><svg><use href="#cvUp"/></svg></em></div>
      <div class="sbd s-sel">
        <div class="pick"><svg class="pc"><use href="#chk"/></svg><span>选择面 (1)</span><i class="pbt"><svg><use href="#sel"/></svg></i></div>
      </div>
      <div class="shd gp"><span>等参数曲线</span><em><svg><use href="#cvUp"/></svg></em></div>
      <div class="sbd s-form">
        <div class="fr h24"><span class="fl">方向</span><span class="combo dc"><svg class="ci"><use href="#dU"/></svg><span class="cv">U</span><i class="drop"></i></span></div>
        <div class="fr h24"><span class="fl">位置</span><span class="combo dc"><svg class="ci"><use href="#dE"/></svg><span class="cv">均匀</span><i class="drop"></i></span></div>
        <div class="fr h21"><span class="fl">数量</span><span class="num"><span class="caret">4</span><i class="spin"><b class="up"></b><b class="dw"></b></i></span></div>
        <div class="fr h21"><span class="ck"></span><span class="fl dis ckl">间距</span><span class="slider"><i class="knob"></i></span><span class="val">25.0000</span></div>
      </div>
      <div class="more-row"><svg><use href="#cvBk"/></svg><svg><use href="#cvBk"/></svg><svg><use href="#cvBk"/></svg></div>
      <div class="rule"></div>
      <div class="btns"><span class="btn ok">确定</span><span class="btn">应用</span><span class="btn">取消</span></div>
    </div>
    <div class="dfoot"></div>
    <i class="spot"></i>
    <i class="beam"></i>
  </div>
</div>
</body>
</html>
```
FILE: styles.css
```css
* { box-sizing: border-box; }
html, body { margin: 0; padding: 0; }
body { width: 1272px; height: 768px; overflow: hidden; font: 12px/16px "Liberation Sans", "Noto Sans CJK SC", sans-serif; color: #000; background: #111; }
.defs { display: block; width: 0; height: 0; overflow: hidden; }
.win { position: relative; width: 1272px; height: 768px; display: flex; flex-direction: column; background: #161616; padding: 0 5px 8px 4px; overflow: hidden; }

/* window title */
.tbar { flex: none; height: 31px; margin: 0 -5px 0 -4px; padding: 5px 8px 0 9px; display: flex; align-items: flex-start; background: linear-gradient(#5e5e5e 0, #3e3e3e 7px, #171717 8px, #171717 100%); color: #fff; }
.logo { width: 20px; height: 22px; margin-top: 2px; flex: none; }
.wtitle { margin: 4px 0 0 5px; font-size: 15.700px; line-height: 18px; color: #f0f0f0; }
.brand { margin: 5px 22px 0 auto; font: 700 15.500px/17px "Liberation Sans", sans-serif; letter-spacing: .9px; }
.wb { width: 23px; height: 23px; margin-left: 5px; border-radius: 3px; border: 1px solid #222; background: linear-gradient(#777, #3a3a3a); display: flex; align-items: center; justify-content: center; position: relative; }
.wb.cl { background: linear-gradient(#e88060, #d03820); font: 700 17px/20px "DejaVu Sans", sans-serif; color: #fff; }
.ws-min { width: 9px; height: 4px; background: #fff; margin-top: 9px; margin-right: 2px; }
.ws-max { width: 13px; height: 12px; border: 2px solid #fff; border-top-width: 3px; }

/* menu */
.menu { flex: none; height: 28px; display: flex; align-items: center; background: linear-gradient(#ececec, #dedede); border-bottom: 1px solid #bdbdbd; }
.nxb { width: 14px; height: 16px; margin-left: -6px; flex: none; }
.mlist { list-style: none; margin: 0 0 0 7px; padding: 0; display: flex; gap: 13px; white-space: nowrap; line-height: 16px; }
.mlist span { font-size: 11.500px; }
.mlist .far { margin-left: 9px; }
.mdi { margin-left: auto; margin-right: 3px; display: flex; gap: 3px; }
.mb { width: 17px; height: 17px; border: 1px solid #808080; border-radius: 4px; background: linear-gradient(#f4f4f4, #c8c8c8); display: flex; align-items: center; justify-content: center; font: 700 11px/14px "DejaVu Sans", sans-serif; font-style: normal; color: #666; }
.m-min { width: 7px; height: 2px; background: #555; margin-top: 7px; }
.m-res { width: 9px; height: 8px; border: 1px solid #555; border-top-width: 2px; }

/* toolbars */
.tb { flex: none; height: 34px; display: flex; align-items: stretch; background: linear-gradient(#e4e4e4, #d8d8d8); border-top: 1px solid #f4f4f4; border-bottom: 1px solid #bcbcbc; }
.t3 { height: 35px; background: linear-gradient(#dcdcdc, #cfcfcf); border-bottom: 2px solid #9c9c9c; }
.sbar { height: 32px; background: linear-gradient(#d8d8d8, #cccccc); padding-left: 6px; align-items: stretch; border-top: 1px solid #e4e4e4; border-bottom: 1px solid #b0b0b0; }
.k { flex: none; display: flex; align-items: center; position: relative; }
.k > svg { width: 24px; height: 24px; margin-left: -12px; flex: none; }
.k > svg.lg { width: 22px; height: 26px; margin-left: -11px; }
.sm > svg { width: 18px; height: 18px; margin-left: -9px; }
.sm > svg.red { width: 16px; height: 16px; margin-left: -8px; outline: 1px solid #d01010; background: #d4d4d4; }
.w3 { width: 3px; } .w5 { width: 5px; } .w6 { width: 6px; } .w8 { width: 8px; } .w9 { width: 9px; } .w10 { width: 10px; } .w11 { width: 11px; }
.w14 { width: 14px; } .w15 { width: 15px; } .w16 { width: 16px; } .w17 { width: 17px; } .w18 { width: 18px; } .w19 { width: 19px; } .w20 { width: 20px; }
.w21 { width: 21px; } .w22 { width: 22px; } .w23 { width: 23px; } .w24 { width: 24px; } .w29 { width: 29px; } .w30 { width: 30px; } .w31 { width: 31px; }
.w32 { width: 32px; } .w40 { width: 40px; } .w43 { width: 43px; }
.gr { width: 3px; height: 24px; margin-left: -1px; background: repeating-linear-gradient(#8c8c8c 0 2px, #f8f8f8 2px 3px, transparent 3px 5px); }
.gr.sh { height: 20px; }
.sp { display: block; width: 2px; height: 100%; margin-left: -1px; background: linear-gradient(90deg, #b8b8b8 50%, #f6f6f6 50%); }
.edge { display: block; width: 2px; height: 100%; margin-left: -1px; background: linear-gradient(90deg, #f6f6f6 50%, #bcbcbc 50%); }
.ar { width: 0; height: 0; margin-left: -4px; border-left: 4px solid transparent; border-right: 4px solid transparent; border-top: 4px solid #111; flex: none; }
.ar.lo { position: absolute; top: 23px; left: 0; margin: 0; }
.more { position: absolute; top: 1px; left: -5px; font: 700 14px/14px "DejaVu Sans", sans-serif; font-style: normal; color: #111; }
.txt { white-space: nowrap; line-height: 16px; }
.dis { color: #a8a8a8; }
.tw { width: 67px; flex: none; display: flex; align-items: center; }
.fill { flex: 1; }
.search { flex: none; width: 142px; height: 21px; margin: 6px 0 0 0; padding-left: 3px; background: #fff; border: 1px solid #b0b0b0; border-radius: 2px; display: flex; align-items: center; justify-content: space-between; color: #aaa; }
.search svg { width: 20px; height: 20px; margin-right: 2px; }

/* combos */
.combo { flex: none; height: 21px; display: flex; align-items: center; border: 1px solid #6f7f8f; border-radius: 3px; background: #fff; overflow: hidden; }
.sbar .combo { align-self: center; }
.c1 { width: 147px; margin-right: 8px; }
.c2 { width: 154px; margin-right: 0; }
.cv { flex: 1; padding-left: 2px; white-space: nowrap; }
.drop { flex: none; align-self: stretch; width: 17px; background: linear-gradient(#3c7cc8, #8cbcf0); position: relative; display: flex; align-items: center; justify-content: center; }
.drop::after { content: ""; width: 0; height: 0; border-left: 6px solid transparent; border-right: 6px solid transparent; border-top: 7px solid #1b2c44; }

/* main */
.main { flex: 1; min-height: 0; display: flex; background: #fff; }
.rail { flex: none; width: 31px; display: flex; flex-direction: column; align-items: flex-end; background: linear-gradient(90deg, #6a6a6a, #b2b2b2 6px, #b8b8b8 27px, #d0d0d0); }
.rgear { height: 32px; width: 31px; display: flex; align-items: center; justify-content: center; color: #222; }
.rgear svg { width: 16px; height: 16px; }
.tab { flex: none; width: 27px; height: 39px; margin-top: 3px; margin-right: 1px; border: 1px solid #8a8a8a; border-right: 0; border-radius: 5px 0 0 5px; background: linear-gradient(#ececec, #cfcfcf); display: flex; align-items: center; justify-content: center; }
.tab svg { width: 22px; height: 26px; }
.tab.gl { margin-top: 15px; }
.tab.act { width: 29px; height: 44px; margin: 1px -1px -2px 0; position: relative; z-index: 1; background: #f6f6f6; }
.nav { flex: none; width: 221px; height: 543px; display: flex; flex-direction: column; background: #f2f2f2; border-right: 1px solid #8c8c8c; border-bottom: 1px solid #8c8c8c; padding: 0 10px 0 7px; }
.nhead { flex: none; height: 31px; display: flex; align-items: center; justify-content: space-between; padding: 0 4px 0 5px; }
.ntitle { font-weight: 700; font-size: 12px; }
.nmax { width: 13px; height: 12px; border: 1px solid #111; border-top-width: 2px; background: #fff; }
.tree { flex: none; height: 426px; width: 203px; border: 1px solid #777; background: #fff; display: flex; flex-direction: column; overflow: hidden; }
.thead { flex: none; height: 21px; display: flex; align-items: center; padding-left: 7px; background: linear-gradient(#fafafa, #d6d6d6); }
.thead span { font-size: 12px; letter-spacing: 1px; }
.sort { width: 0; height: 0; margin-left: 16px; border-left: 6px solid transparent; border-right: 6px solid transparent; border-bottom: 6px solid #111; }
.trows { flex: 1; min-height: 0; overflow: hidden; }
.r { height: 20px; display: flex; align-items: center; position: relative; white-space: nowrap; background: #fff; border-bottom: 1px solid #ececec; }
.r.alt { background: #f7f7f7; }
.r0 { padding-left: 5px; }
.r1 { padding-left: 41px; }
.r0::before { content: ""; position: absolute; left: 10px; top: 0; bottom: 0; border-left: 1px dotted #777; }
.r0.first::before { top: 9px; }
.r0.lastr::before { bottom: 10px; }
.r1::before { content: ""; position: absolute; left: 29px; top: 0; bottom: 0; border-left: 1px dotted #777; }
.r1.lastr::before { bottom: 10px; }
.r1::after { content: ""; position: absolute; left: 30px; width: 10px; top: 9px; border-top: 1px dotted #777; }
.ex { position: relative; z-index: 1; flex: none; width: 10px; height: 10px; background: #fff; border: 1px solid #888; border-radius: 1px; font: 11px/8px "Liberation Sans", sans-serif; font-style: normal; text-align: center; color: #111; }
.ex.none { visibility: hidden; }
.ti { width: 15px; height: 16px; flex: none; }
.cb { width: 13px; height: 13px; flex: none; position: relative; z-index: 1; }
.m2 { margin-left: 2px; } .m3 { margin-left: 2px; } .m4 { margin-left: 4px; } .m6 { margin-left: 6px; }
.rt { margin-left: 5px; }
.rt.m4t { margin-left: 3px; }
.rc { margin-left: 3px; }
.g { color: #a8a8a8; }
.b { font-weight: 700; }
.hsb { flex: none; height: 17px; position: relative; background: #f4f4f4; display: flex; align-items: center; }
.sba { position: absolute; left: 4px; width: 11px; height: 11px; transform: rotate(90deg); }
.sba.rgt { left: auto; right: 4px; transform: rotate(-90deg); }
.thumb { width: 83px; height: 15px; margin-left: 18px; background: #c8c8c8; }
.sash { flex: none; height: 13px; position: relative; display: flex; align-items: center; justify-content: center; background: linear-gradient(transparent 5px, #fff 5px, #fff 6px, #d0d0d0 6px, #d0d0d0 7px, transparent 7px); }
.hd { width: 36px; height: 6px; border: 1px solid #aaa; border-radius: 1px; background: #d8d8d8; box-shadow: 0 0 0 3px #f2f2f2; }
.acc { flex: none; height: 23px; width: 203px; display: flex; align-items: center; justify-content: space-between; padding-left: 7px; border-bottom: 1px solid #8c8c8c; background: linear-gradient(#fbfbfb 0, #f0f0f0 50%, #d6d6d6 52%, #d0d0d0); color: #000066; }
.acc em { width: 23px; align-self: stretch; border-left: 1px solid #aaa; display: flex; align-items: center; justify-content: center; }
.acc svg { width: 15px; height: 15px; }
.view { flex: 1; min-width: 0; background: #fff; }
.scene { display: block; width: 1011px; height: 546px; }
.sl { font: 12px "Liberation Sans", sans-serif; }

/* status */
.status { flex: none; height: 21px; display: flex; background: linear-gradient(#dfdfdf, #d2d2d2); border-bottom: 1px solid #888; }
.st { flex: none; padding-left: 3px; line-height: 19px; border-right: 1px solid #f0f0f0; }
.s-a { width: 574px; }
.s-b { width: 576px; }
.s-c { width: 20px; }
.s-d { width: 75px; display: flex; gap: 4px; align-items: center; }
.s-d svg { width: 16px; height: 16px; }
.s-e { flex: 1; border-right: 0; }

/* dialog */
.dlg { position: absolute; left: 171px; top: 257px; width: 328px; height: 305px; display: flex; flex-direction: column; border-radius: 5px; background: #e8e8e8; overflow: hidden; z-index: 5; }
.dt { flex: none; height: 21px; margin-top: 1px; display: flex; align-items: stretch; background: linear-gradient(#2a2a2a, #0d0d0d); color: #fff; border-radius: 5px 5px 0 0; }
.dg { width: 21px; border-right: 1px solid #ccc; display: flex; align-items: center; justify-content: center; color: #eee; }
.dg svg { width: 14px; height: 14px; }
.dn { flex: 1; padding: 1px 0 0 9px; line-height: 21px; font-weight: 700; color: #e8e8e8; }
.db { width: 22px; border-left: 1px solid #ccc; display: flex; align-items: center; justify-content: center; }
.db svg { width: 14px; height: 14px; }
.dx { font: 700 15px/21px "DejaVu Sans", sans-serif; color: #fff; }
.db-body { flex: 1; min-height: 0; padding: 4px 7px 0; background: linear-gradient(#f2f2f2, #e4e4e4); }
.shd { height: 22px; display: flex; align-items: center; justify-content: space-between; padding-left: 6px; background: linear-gradient(#fff 0, #f4f4f4 50%, #dcdcdc 54%, #d4d4d4); border-bottom: 1px solid #a0a0a0; color: #000066; }
.shd span { padding-top: 2px; }
.shd em { width: 23px; align-self: stretch; border-left: 1px solid #b0b0b0; display: flex; align-items: center; justify-content: center; }
.shd svg { width: 14px; height: 14px; }
.gp { margin-top: 1px; }
.sbd { background: #d0d0d0; }
.s-sel { height: 47px; padding: 7px 9px 0 8px; }
.pick { height: 31px; display: flex; align-items: center; border-radius: 7px; background: linear-gradient(90deg, #e2a06a, #dcb48c 45%, #d4cfc9 85%, #d0d0d0); }
.pc { width: 14px; height: 14px; margin-left: 2px; }
.pick span { margin-left: 4px; }
.pbt { margin-left: auto; width: 30px; height: 30px; border: 1px solid #888; border-radius: 4px; background: linear-gradient(#fbb078, #f07030); display: flex; align-items: center; justify-content: center; }
.pbt svg { width: 24px; height: 24px; }
.s-form { height: 121px; padding: 8px 9px 0 8px; display: flex; flex-direction: column; gap: 4px; }
.fr { display: flex; align-items: center; }
.h24 { height: 24px; }
.h21 { height: 21px; }
.fl { white-space: nowrap; }
.dc { width: 139px; height: 24px; margin-left: auto; border-color: #777; }
.ci { width: 17px; height: 17px; margin-left: 2px; flex: none; }
.dc .cv { padding-left: 5px; }
.num { width: 80px; height: 21px; margin-left: auto; display: flex; align-items: center; background: #fff; border: 1px solid #666; border-radius: 3px; overflow: hidden; font: 14px/18px "Liberation Serif", serif; }
.caret { flex: 1; padding-left: 3px; line-height: 16px; position: relative; }
.caret::after { content: ""; position: absolute; left: 11px; top: 0; width: 1px; height: 16px; background: #000; }
.spin { flex: none; width: 16px; align-self: stretch; display: flex; flex-direction: column; background: #3c7cc8; }
.spin b { flex: 1; display: flex; align-items: center; justify-content: center; }
.spin b::after { content: ""; width: 0; height: 0; border-left: 5px solid transparent; border-right: 5px solid transparent; }
.spin .up::after { border-bottom: 5px solid #111; }
.spin .dw::after { border-top: 5px solid #111; }
.ck { width: 16px; height: 16px; border: 1px solid #777; border-radius: 3px; background: linear-gradient(#f0f0f0, #c0c0c0); }
.ckl { margin-left: 6px; }
.slider { width: 66px; height: 2px; margin-left: 94px; background: #a8a8a8; border-bottom: 1px solid #fff; position: relative; display: flex; align-items: center; }
.knob { position: absolute; left: 14px; top: -9px; width: 10px; height: 19px; border-radius: 5px 5px 3px 3px; background: linear-gradient(#f2f2f2, #c4c4c4); border: 1px solid #bbb; }
.val { width: 81px; height: 21px; margin-left: auto; border: 1px solid #a8a8a8; border-radius: 3px; font: 15px/20px "Liberation Mono", monospace; color: #8a8a8a; padding-left: 12px; overflow: hidden; white-space: nowrap; }
.more-row { height: 14px; display: flex; justify-content: center; gap: 3px; background: linear-gradient(#f8f8f8, #e0e0e0); border-bottom: 1px solid #a8a8a8; }
.more-row svg { width: 12px; height: 12px; }
.rule { height: 2px; margin-top: 3px; background: linear-gradient(#c4c4c4 50%, #fff 50%); }
.btns { display: flex; justify-content: flex-end; gap: 8px; padding: 6px 11px 0 0; }
.btn { width: 51px; height: 23px; border: 1px solid #6a6a6a; border-radius: 4px; background: linear-gradient(#fdfdfd, #eee 50%, #cfcfcf 52%, #dcdcdc); text-align: center; line-height: 21px; }
.btn.ok { background: linear-gradient(#c8eeb8, #8ed078 50%, #5cb848 52%, #7cd060); border-color: #488038; }
.dfoot { flex: none; height: 9px; background: #161616; }
.spot { position: absolute; left: 262px; top: 167px; width: 48px; height: 48px; border-radius: 50%; background: #00dc00; mix-blend-mode: multiply; }
.beam { position: absolute; z-index: 2; left: 286px; top: 184px; width: 6px; height: 17px; border-top: 2px solid #ff30d0; border-bottom: 2px solid #ff30d0; background: linear-gradient(90deg, transparent 2px, #ff30d0 2px, #ff30d0 4px, transparent 4px); }
```
